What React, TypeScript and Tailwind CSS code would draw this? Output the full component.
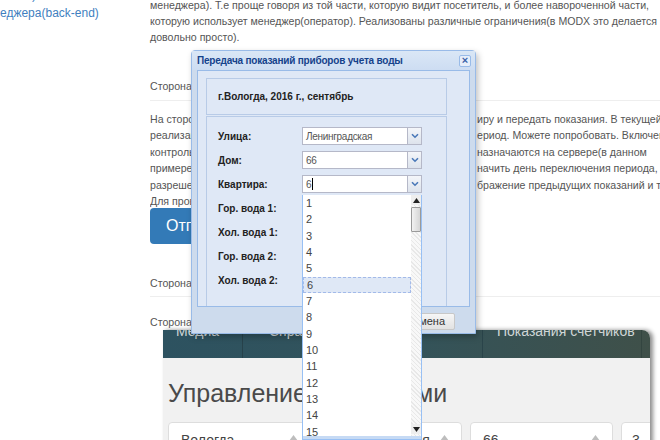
import React from 'react'

const para2 = [
  { left: 'На стороне клиента можно выбрать квартиру', right: 'иру и передать показания. В текущей' },
  { left: 'реализации показания принимаются за период', right: 'ериод. Можете попробовать. Включена' },
  { left: 'контроль значений, и даты периода', right: 'назначаются на сервере(в данном' },
  { left: 'примере можно например назначить', right: 'начить день переключения периода,' },
  { left: 'разрешение на отображение', right: 'бражение предыдущих показаний и т.д.' },
  { left: 'Для проверки', right: '' },
]

const labels = ['Улица:', 'Дом:', 'Квартира:', 'Гор. вода 1:', 'Хол. вода 1:', 'Гор. вода 2:', 'Хол. вода 2:']

function Chevron() {
  return (
    <svg width="8" height="6" viewBox="0 0 8 6">
      <path d="M1 1.2 L4 4.2 L7 1.2" fill="none" stroke="#4a78b8" strokeWidth="1.6" />
    </svg>
  )
}

function Combo({ value, caret }: { value: string; caret?: boolean }) {
  return (
    <div className="flex h-[18px] w-[120px]">
      <div className="flex flex-1 items-center border border-[#b5b8c8] bg-white pl-[3px] text-[10px] tracking-[-0.3px] text-[#555]">
        {value}
        {caret && <span className="ml-[1px] h-[12px] w-px bg-black" />}
      </div>
      <div className="flex w-[14px] items-center justify-center border border-l-0 border-[#b5b8c8] bg-gradient-to-b from-[#f4f6fa] to-[#dde3ec]">
        <Chevron />
      </div>
    </div>
  )
}

function UpTri({ className = '' }: { className?: string }) {
  return (
    <svg width="7" height="5" viewBox="0 0 7 5" className={className}>
      <path d="M0 5 L3.5 0 L7 5 Z" fill="#222" />
    </svg>
  )
}

function Dialog() {
  return (
    <div className="absolute left-[191px] top-[50px] flex h-[284px] w-[285px] flex-col rounded-t-[4px] border border-[#99bbe8] bg-[#cddbed] shadow-[2px_3px_6px_rgba(0,0,0,0.25)]">
      <div className="flex h-[19px] shrink-0 items-center justify-between bg-gradient-to-b from-[#dae7f6] to-[#cdddf2] pl-[5px] pr-[4px]">
        <span className="text-[10px] font-bold tracking-[-0.2px] text-[#15428b]">Передача показаний приборов учета воды</span>
        <span className="flex h-[12px] w-[12px] items-center justify-center rounded-[2px] border border-[#99bbe8] bg-[#e6eefa] text-[11px] font-bold leading-none text-[#3a62a8]">
          ×
        </span>
      </div>
      <div className="mx-[5px] flex h-[237px] shrink-0 flex-col border border-[#99bbe8] bg-[#dfe8f6] pl-[8px] pr-[22px] pt-[7px]">
        <div className="flex h-[37px] shrink-0 items-center border border-[#b8cbe7] pl-[11px] text-[10px] font-bold text-[#222]">
          г.Вологда, 2016 г., сентябрь
        </div>
        <div className="mt-[1px] flex flex-1 flex-col gap-[6px] border border-b-0 border-[#b8cbe7] pl-[11px] pt-[10px]">
          {labels.map((l, i) => (
            <div key={l} className="flex h-[18px] shrink-0 items-center">
              <span className="w-[84px] text-[10px] font-bold text-[#222]">{l}</span>
              {i === 0 && <Combo value="Ленинградская" />}
              {i === 1 && <Combo value="66" />}
              {i === 2 && <Combo value="6" caret />}
            </div>
          ))}
        </div>
      </div>
      <div className="flex flex-1 items-start justify-end pr-[20px] pt-[6px]">
        <div className="flex h-[17px] items-center rounded-[2px] border border-[#c8c8c8] bg-gradient-to-b from-[#f6f6f6] to-[#e2e2e2] px-[9px] text-[11px] text-[#333]">
          Отмена
        </div>
      </div>
    </div>
  )
}

function DropList() {
  const items = Array.from({ length: 15 }, (_, i) => i + 1)
  return (
    <div className="absolute left-[302px] top-[195px] flex h-[245px] w-[120px] flex-col border border-t-0 border-[#98c0f4] bg-white">
      <div className="flex h-[242px] overflow-hidden">
        <div className="flex flex-1 flex-col">
          {items.map((n) => (
            <div
              key={n}
              className={`flex h-[16.35px] shrink-0 items-center pl-[3px] text-[11px] text-[#444] ${
                n === 6 ? 'border border-dashed border-[#a3bae9] bg-[#dfe8f6] pl-[2px]' : ''
              }`}
            >
              {n}
            </div>
          ))}
        </div>
        <div className="flex w-[10px] flex-col bg-[repeating-linear-gradient(45deg,#e8e8e8_0_1px,#f8f8f8_1px_3px)]">
          <div className="flex h-[10px] items-center justify-center bg-[#eeeeee]">
            <UpTri />
          </div>
          <div className="mt-[2px] h-[25px] rounded-[1px] border border-[#9a9a9a] bg-gradient-to-r from-[#f2f2f2] to-[#d6d6d6]" />
          <div className="flex-1" />
          <div className="mb-[2px] flex h-[10px] items-center justify-center bg-[#eeeeee]">
            <UpTri className="rotate-180" />
          </div>
        </div>
      </div>
      <div className="h-[3px] bg-[#c6daf4]" />
    </div>
  )
}

function SpinBox({ value, pl = 'pl-[12px]' }: { value: string; pl?: string }) {
  return (
    <div className={`flex h-[40px] w-[143px] shrink-0 items-start justify-between rounded-[4px] border border-[#dddddd] bg-white pr-[12px] pt-[7px] ${pl}`}>
      <span className="text-[14px] text-[#444]">{value}</span>
      <svg width="9" height="6" viewBox="0 0 9 6" className="mt-[5px]">
        <path d="M0 6 L4.5 0 L9 6 Z" fill="#bdbdbd" />
      </svg>
    </div>
  )
}

export default function App() {
  return (
    <div className="relative flex h-[440px] w-[660px] items-start overflow-hidden bg-white font-['Liberation_Sans',Arial,sans-serif]">
      <div className="w-[150px] shrink-0 text-[12px] leading-[16px] text-[#3f7fc0]">
        <div className="-mt-[13px]">иента)</div>
        <div className="pt-[2px]">еджера(back-end)</div>
      </div>

      <div className="w-[510px] shrink-0 text-[10.6px] text-[#555]">
        <div className="-mt-[3px] whitespace-nowrap leading-[16px]">
          <div>менеджера). Т.е проще говоря из той части, которую видит посетитель, и более навороченной части,</div>
          <div>которую использует менеджер(оператор). Реализованы различные ограничения(в MODX это делается</div>
          <div>довольно просто).</div>
        </div>

        <div className="mt-[33px] leading-[16px]">Сторона клиента(front-end)</div>
        <div className="mt-[6px] h-px bg-[#eeeeee]" />

        <div className="mt-[10px] leading-[16.4px]">
          {para2.map((l) => (
            <div key={l.left} className="flex whitespace-nowrap">
              <span className="w-[327px] shrink-0 overflow-hidden">{l.left}</span>
              <span>{l.right}</span>
            </div>
          ))}
        </div>

        <div className="-mt-[1px] flex h-[36px] w-[120px] items-center rounded-[4px] bg-[#337ab7] pl-[16px] text-[16px] text-white">
          Отправить
        </div>

        <div className="mt-[31px] leading-[16px]">Сторона менеджера(back-end)</div>
        <div className="mt-[5px] h-px bg-[#eeeeee]" />
        <div className="mt-[17px] leading-[16px]">Сторона менеджера(back-end)</div>

        <div className="ml-[13px] flex h-[120px] w-[487px] flex-col overflow-hidden rounded-tr-[8px] shadow-[3px_0_4px_rgba(0,0,0,0.45)]">
          <div className="flex h-[28px] shrink-0 overflow-hidden bg-gradient-to-r from-[#2d5260] via-[#33535a] to-[#3f5049] text-[14px] leading-[14px] text-[#cfd6d6]">
            <div className="w-[80px] border-r border-[#27424b] pl-[13px]">
              <div className="-mt-[6px]">Медиа</div>
            </div>
            <div className="w-[240px] border-r border-[#2a444a] pl-[26px]">
              <div className="-mt-[6px]">Справочники</div>
            </div>
            <div className="w-[159px] border-r border-[#334540] pl-[14px]">
              <div className="-mt-[6px]">Показания счетчиков</div>
            </div>
            <div className="flex-1" />
          </div>
          <div className="flex-1 bg-[#f1f1f1] pl-[5px]">
            <div className="mt-[20px] text-[25px] leading-[30px] text-[#4a4a4a]">Управление счетчиками</div>
            <div className="mt-[14px] flex gap-[8px]">
              <SpinBox value="Вологда" />
              <SpinBox value="Ленинградская" />
              <SpinBox value="66" />
              <SpinBox value="3" pl="pl-[10px]" />
            </div>
          </div>
        </div>
      </div>

      <Dialog />
      <DropList />
    </div>
  )
}
